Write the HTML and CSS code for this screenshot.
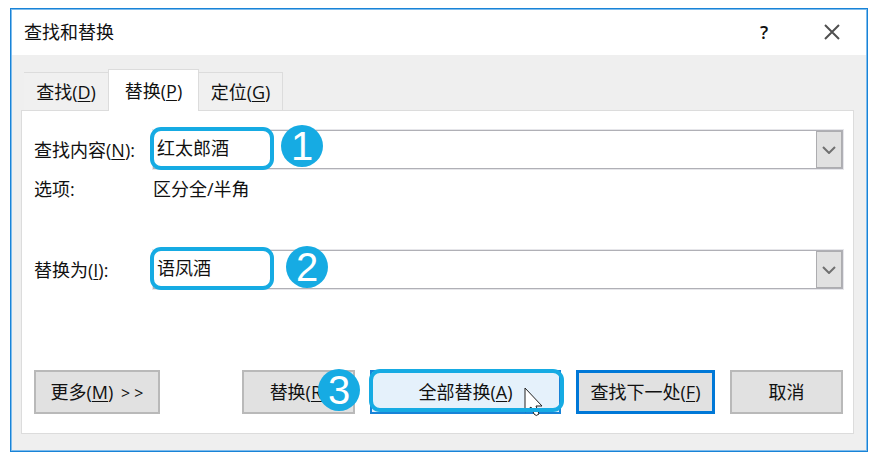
FILE: index.html
```html
<!DOCTYPE html>
<html lang="zh-CN">
<head>
    <meta charset="utf-8">
    <title>查找和替换</title>
    <link rel="stylesheet" href="styles.css">
</head>
<body>

<div class="dialog">
    <!-- 标题栏 -->
    <div class="titlebar">
        <span class="title">查找和替换</span>
        <button class="title-btn" type="button">?</button>
        <button class="title-btn" type="button" aria-label="关闭">
            <svg width="16" height="16" viewBox="0 0 16 16"><path d="M1 1L15 15M15 1L1 15"/></svg>
        </button>
    </div>

    <div class="dialog-body">
        <!-- 选项卡 -->
        <div class="tabs">
            <button class="tab" type="button">查找(<u>D</u>)</button>
            <button class="tab active" type="button">替换(<u>P</u>)</button>
            <button class="tab" type="button">定位(<u>G</u>)</button>
        </div>

        <form class="panel">
            <div class="row">
                <label for="find">查找内容(<u>N</u>):</label>
                <div class="combo">
                    <input id="find" type="text" value="红太郎酒">
                    <button class="arrow" type="button" aria-label="展开">
                        <svg width="14" height="8" viewBox="0 0 14 8"><path d="M1 1L7 7L13 1"/></svg>
                    </button>
                    <span class="mark mark-field"></span>
                    <span class="badge badge-find">1</span>
                </div>
            </div>
            <div class="row">
                <span>选项:</span>
                <span>区分全/半角</span>
            </div>
            <div class="row row-replace">
                <label for="replace">替换为(<u>I</u>):</label>
                <div class="combo">
                    <input id="replace" type="text" value="语凤酒">
                    <button class="arrow" type="button" aria-label="展开">
                        <svg width="14" height="8" viewBox="0 0 14 8"><path d="M1 1L7 7L13 1"/></svg>
                    </button>
                    <span class="mark mark-field"></span>
                    <span class="badge badge-replace">2</span>
                </div>
            </div>

            <!-- 底部按钮 -->
            <div class="buttons">
                <button class="btn btn-more" type="button">更多(<u>M</u>) <span class="more">&gt;&nbsp;&gt;</span></button>
                <div class="btn-wrap btn-wrap-replace">
                    <button class="btn" type="button">替换(<u>R</u>)</button>
                    <span class="badge badge-all">3</span>
                </div>
                <div class="btn-wrap btn-wrap-all">
                    <button class="btn hover" type="button">全部替换(<u>A</u>)</button>
                    <svg class="cursor" width="20" height="30" viewBox="0 0 20 30"><path d="M1 1V25L7 20L10 27Q12 30 15 27L12 19H18Z"/></svg>
                    <span class="mark mark-button"></span>
                </div>
                <button class="btn btn-next" type="button">查找下一处(<u>F</u>)</button>
                <button class="btn btn-cancel" type="button">取消</button>
            </div>
        </form>
    </div>
</div>

</body>
</html>
```

FILE: styles.css
```css
* {
    box-sizing: border-box;
}

body {
    margin: 8px 10px;
    background: #fff;
    color: #111;
    font: 18px/24px "Open Sans", "Noto Sans CJK SC", sans-serif;
}

button, input {
    font: inherit;
    color: inherit;
}

button {
    padding: 0;
    white-space: nowrap;
}

u {
    text-underline-offset: 2px;
}

svg {
    fill: none;
    stroke: #222;
}

.dialog {
    border: 1px solid #1883d7;
    box-shadow: inset 0 0 0 1px #7fbcec;
    padding: 1px;
}

/* 标题栏 */
.titlebar {
    display: flex;
    align-items: center;
    height: 45px;
    padding: 0 0 2px 12px;
}

.title {
    flex: 1;
}

.title-btn {
    display: flex;
    align-items: center;
    justify-content: center;
    width: 68px;
    height: 43px;
    border: 0;
    background: none;
    font-weight: 600;
}

.title-btn svg {
    stroke: #505050;
    stroke-width: 2;
}

/* 选项卡 */
.dialog-body {
    padding: 14px 12px 16px 9px;
    background: #efefef;
}

.tabs {
    display: flex;
    align-items: flex-end;
    padding-left: 3px;
}

.tab {
    width: 84px;
    height: 38px;
    border: 1px solid #dcdcdc;
    border-width: 1px 1px 0 0;
    background: #f0f0f0;
}

.tab:first-child {
    border-right: 0;
}

.tab.active {
    width: 91px;
    height: 42px;
    margin-bottom: -1px;
    border-left-width: 1px;
    background: #fff;
    z-index: 1;
}

.panel {
    padding: 19px 10px 19px 12px;
    border: 1px solid #dcdcdc;
    background: #fff;
}

.row {
    display: grid;
    grid-template-columns: 119px 1fr;
    align-items: center;
    min-height: 39px;
}

.row-replace {
    margin-top: 42px;
}

.combo {
    position: relative;
    display: flex;
    height: 39px;
    border: 1px solid #b0b0b6;
    box-shadow: 0 0 0 1px #e6e6ea;
}

.combo input {
    flex: 1;
    min-width: 0;
    padding: 0 3px 4px;
    border: 0;
    outline: 0;
    background: #fff;
}

.arrow {
    display: flex;
    align-items: center;
    justify-content: center;
    width: 26px;
    border: 1px solid #adadb0;
    background: #e1e1e1;
}

.arrow svg {
    stroke: #707070;
    stroke-width: 2;
}

/* 按钮 */
.buttons {
    display: flex;
    gap: 15px;
    margin-top: 81px;
}

.btn {
    width: 100%;
    height: 44px;
    border: 2px solid #b9b9b9;
    background: #e1e1e1;
}

.btn.hover {
    border-color: #1883d7;
    background: #e5f1fb;
}

.btn-more {
    width: 126px;
    margin-right: auto;
}

.more {
    margin-left: 3px;
    font-size: 16px;
}

.btn-wrap {
    position: relative;
}

.btn-wrap-replace {
    width: 113px;
    z-index: 1;
}

.btn-wrap-all {
    width: 191px;
}

.btn-next {
    width: 139px;
    border: 3px solid #0078d7;
}

.btn-cancel {
    width: 113px;
}

/* 步骤标注 */
.mark {
    position: absolute;
    border: 4px solid #16abe3;
    border-radius: 11px;
    pointer-events: none;
}

.mark-field {
    top: -4px;
    left: -4px;
    width: 124px;
    height: 43px;
}

.mark-button {
    top: -1px;
    left: -1px;
    width: 195px;
    height: 43px;
}

.badge {
    position: absolute;
    width: 42px;
    height: 42px;
    border-radius: 50%;
    background: #16abe3;
    color: #fff;
    font: 40px/42px "Liberation Sans", sans-serif;
    text-align: center;
}

.badge-find {
    top: -6px;
    left: 127px;
}

.badge-replace {
    top: -5px;
    left: 132px;
}

.badge-all {
    top: -1px;
    left: 76px;
}

.cursor {
    position: absolute;
    top: 17px;
    left: 154px;
    fill: #fff;
}
```
